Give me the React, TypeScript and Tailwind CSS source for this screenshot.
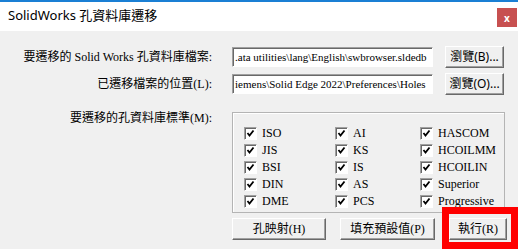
import React from 'react';

const serif = { fontFamily: '"Liberation Serif", "Noto Sans CJK TC", serif' };
const sans = { fontFamily: '"Noto Sans", "Noto Sans CJK TC", sans-serif' };

const standards = [
  ['ISO', 'AI', 'HASCOM'],
  ['JIS', 'KS', 'HCOILMM'],
  ['BSI', 'IS', 'HCOILIN'],
  ['DIN', 'AS', 'Superior'],
  ['DME', 'PCS', 'Progressive'],
];

function Button({ label, className, font }: { label: string; className: string; font: React.CSSProperties }) {
  return (
    <div
      className={`flex items-center justify-center h-[22px] bg-[#f0f0f0] border border-t-white border-l-white border-r-[#696969] border-b-[#696969] text-[12px] text-black shadow-[inset_-1px_-1px_0_#a0a0a0] ${className}`}
      style={font}
    >
      {label}
    </div>
  );
}

function Field({ value }: { value: string }) {
  return (
    <div
      className="w-[201px] h-[20px] bg-white border border-t-[#a0a0a0] border-l-[#a0a0a0] border-r-white border-b-white shadow-[inset_1px_1px_0_#696969] overflow-hidden whitespace-nowrap pl-[2px] text-[11px] leading-[18px] text-black"
      style={serif}
    >
      {value}
    </div>
  );
}

function Check({ label }: { label: string }) {
  return (
    <div className="flex items-center h-[17px] gap-[5px]">
      <div className="w-[13px] h-[13px] bg-white border border-t-[#a0a0a0] border-l-[#a0a0a0] border-r-white border-b-white shadow-[inset_1px_1px_0_#696969] flex items-center justify-center">
        <svg width="9" height="9" viewBox="0 0 9 9">
          <polyline points="1.5,4 3.5,6.5 7.5,1.5" fill="none" stroke="#000" strokeWidth="1.8" />
        </svg>
      </div>
      <span className="text-[12px] leading-[17px] text-black" style={serif}>{label}</span>
    </div>
  );
}

export default function App() {
  return (
    <div className="w-[518px] h-[249px] bg-[#f0f0f0] overflow-hidden relative">
      {/* Title bar */}
      <div className="h-[31px] bg-white border-t-2 border-[#1a7fd4] flex justify-between">
        <div className="pl-[8px] pt-[4px] text-[13px] text-black" style={sans}>SolidWorks 孔資料庫遷移</div>
        <div className="mt-[6px] mr-[1px] w-[20px] h-[19px] bg-[#c75050] flex items-center justify-center text-white text-[10px] font-bold leading-none" style={sans}>
          x
        </div>
      </div>

      {/* Path rows */}
      <div className="flex flex-col gap-[5px] pt-[15px]">
        <div className="flex items-center">
          <div className="w-[212px] text-right text-[12px] text-black" style={serif}>要遷移的 Solid Works 孔資料庫檔案:</div>
          <div className="ml-[20px]"><Field value={".ata utilities\\lang\\English\\swbrowser.sldedb"} /></div>
          <Button label="瀏覽(B)..." className="ml-[12px] w-[59px]" font={sans} />
        </div>
        <div className="flex items-center">
          <div className="w-[212px] text-right text-[12px] text-black" style={serif}>已遷移檔案的位置(L):</div>
          <div className="ml-[20px]"><Field value={"iemens\\Solid Edge 2022\\Preferences\\Holes"} /></div>
          <Button label="瀏覽(O)..." className="ml-[12px] w-[59px]" font={sans} />
        </div>
      </div>

      {/* Standards */}
      <div className="flex mt-[17px]">
        <div className="w-[212px] text-right text-[12px] text-black -mt-[3px]" style={serif}>要遷移的孔資料庫標準(M):</div>
        <div className="ml-[20px] w-[273px] h-[101px] border border-[#b4b4b4] shadow-[inset_1px_1px_0_#ffffff] pt-[12px] pl-[11px]">
          <div className="grid grid-cols-[91px_85px_1fr]">
            {standards.map((row) =>
              row.map((s) => <Check key={s} label={s} />)
            )}
          </div>
        </div>
      </div>

      {/* Bottom buttons */}
      <div className="flex mt-[5px] pl-[232px]">
        <Button label="孔映射(H)" className="w-[94px]" font={serif} />
        <Button label="填充預設值(P)" className="ml-[14px] w-[95px]" font={serif} />
        <Button label="執行(R)" className="ml-[14px] w-[58px]" font={serif} />
      </div>

      {/* Highlight overlay */}
      <div className="absolute left-[442px] top-[207px] w-[76px] h-[42px] border-[7px] border-[#ff0000] pointer-events-none" />
    </div>
  );
}
